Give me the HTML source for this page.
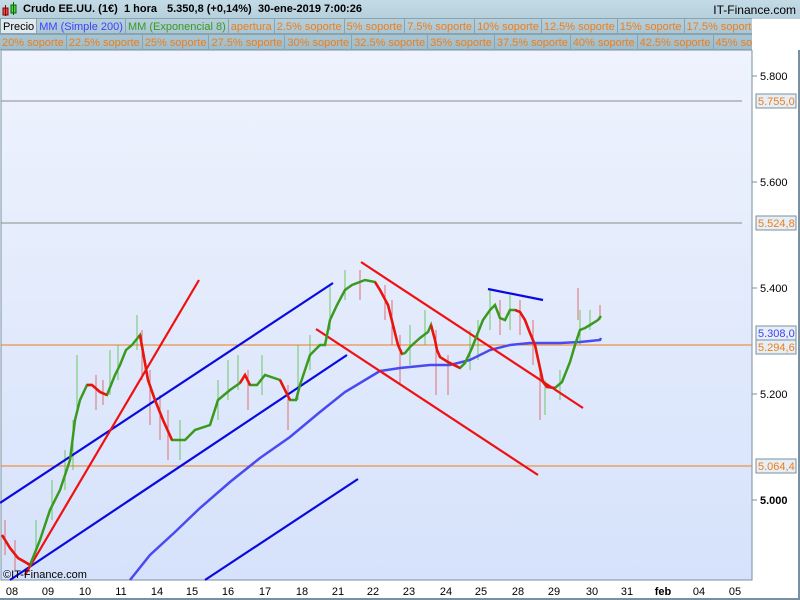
<!DOCTYPE html>
<html><head><meta charset="utf-8"><style>
body{margin:0;width:800px;height:600px;overflow:hidden;background:#fff;font-family:"Liberation Sans",sans-serif;}
#hdr{position:absolute;left:0;top:0;width:800px;height:50px;background:linear-gradient(#c4dbe6,#9dbccb);}
.row{position:absolute;left:0;height:16px;display:flex;font-size:11px;line-height:16px;}
.row span{border:1px solid #8aa3b0;border-left:none;padding:0 2px;white-space:nowrap;color:#f07d18;}
.t{position:absolute;top:3px;font-size:11px;font-weight:bold;color:#000;white-space:nowrap}
</style></head><body>
<div id="hdr">
<svg style="position:absolute;left:2px;top:2px" width="16" height="14"><rect x="1" y="6" width="5" height="7" fill="#e25050" stroke="#800"/><line x1="3.5" y1="3" x2="3.5" y2="14" stroke="#800"/><rect x="9" y="3" width="5" height="8" fill="#5bd04a" stroke="#060"/><line x1="11.5" y1="0" x2="11.5" y2="13" stroke="#060"/></svg>
<div class="t" style="left:23px">Crudo EE.UU. (1€)</div>
<div class="t" style="left:124px">1 hora</div>
<div class="t" style="left:167px">5.350,8 (+0,14%)</div>
<div class="t" style="left:258px">30-ene-2019 7:00:26</div>
<div class="t" style="right:4px;font-size:12px;font-weight:normal">IT-Finance.com</div>
<div class="row" style="top:18px;width:752px;overflow:hidden"><span style="color:#000;background:#dfe9ee;border-left:1px solid #8aa3b0">Precio</span><span style="color:#4040ff">MM (Simple 200)</span><span style="color:#3a9a20">MM (Exponencial 8)</span><span>apertura</span><span>2.5% soporte</span><span>5% soporte</span><span>7.5% soporte</span><span>10% soporte</span><span>12.5% soporte</span><span>15% soporte</span><span>17.5% soporte</span></div>
<div class="row" style="top:34px;width:752px;overflow:hidden"><span>20% soporte</span><span>22.5% soporte</span><span>25% soporte</span><span>27.5% soporte</span><span>30% soporte</span><span>32.5% soporte</span><span>35% soporte</span><span>37.5% soporte</span><span>40% soporte</span><span>42.5% soporte</span><span>45% soporte</span></div>
<div style="position:absolute;left:752px;top:19px;width:48px;height:31px;background:#fff"></div>
</div>
<svg style="position:absolute;left:0;top:50px" width="800" height="550" viewBox="0 50 800 550" font-family="Liberation Sans, sans-serif" font-size="11">
<defs><linearGradient id="g" x1="0" y1="0" x2="0" y2="1"><stop offset="0" stop-color="#eef3fd"/><stop offset="1" stop-color="#d6e2fb"/></linearGradient></defs>
<rect x="1" y="50" width="751" height="530" fill="url(#g)" stroke="#7890a0"/>
<rect x="0" y="598" width="800" height="2" fill="#7890a0"/>
<rect x="798" y="50" width="2" height="550" fill="#7890a0"/>
<g stroke="#8a8a8a"><line x1="1" y1="101" x2="742" y2="101"/><line x1="1" y1="223" x2="742" y2="223"/></g>
<g stroke="#f07d18"><line x1="1" y1="345" x2="752" y2="345"/><line x1="1" y1="466" x2="752" y2="466"/></g>
<g stroke="#50c040" stroke-width="1" opacity="0.8">
<line x1="36" y1="520" x2="36" y2="555"/><line x1="52" y1="480" x2="52" y2="520"/><line x1="65" y1="450" x2="65" y2="490"/><line x1="73" y1="420" x2="73" y2="470"/><line x1="77" y1="355" x2="77" y2="410"/><line x1="110" y1="350" x2="110" y2="395"/><line x1="118" y1="345" x2="118" y2="380"/><line x1="137" y1="315" x2="137" y2="350"/><line x1="180" y1="420" x2="180" y2="460"/><line x1="218" y1="380" x2="218" y2="420"/><line x1="228" y1="360" x2="228" y2="400"/><line x1="238" y1="355" x2="238" y2="390"/><line x1="262" y1="355" x2="262" y2="395"/><line x1="298" y1="345" x2="298" y2="400"/><line x1="310" y1="335" x2="310" y2="370"/><line x1="330" y1="285" x2="330" y2="330"/><line x1="345" y1="270" x2="345" y2="300"/><line x1="410" y1="325" x2="410" y2="365"/><line x1="425" y1="310" x2="425" y2="345"/><line x1="470" y1="330" x2="470" y2="370"/><line x1="478" y1="320" x2="478" y2="360"/><line x1="490" y1="290" x2="490" y2="330"/><line x1="510" y1="295" x2="510" y2="330"/><line x1="545" y1="380" x2="545" y2="415"/><line x1="560" y1="370" x2="560" y2="400"/><line x1="580" y1="310" x2="580" y2="345"/><line x1="590" y1="310" x2="590" y2="330"/></g>
<g stroke="#e05050" stroke-width="1" opacity="0.8">
<line x1="5" y1="520" x2="5" y2="555"/><line x1="15" y1="540" x2="15" y2="570"/><line x1="96" y1="375" x2="96" y2="410"/><line x1="103" y1="380" x2="103" y2="405"/><line x1="142" y1="330" x2="142" y2="380"/><line x1="150" y1="370" x2="150" y2="425"/><line x1="160" y1="395" x2="160" y2="440"/><line x1="168" y1="410" x2="168" y2="460"/><line x1="248" y1="370" x2="248" y2="410"/><line x1="288" y1="385" x2="288" y2="430"/><line x1="360" y1="270" x2="360" y2="300"/><line x1="385" y1="285" x2="385" y2="320"/><line x1="392" y1="300" x2="392" y2="345"/><line x1="400" y1="335" x2="400" y2="385"/><line x1="436" y1="330" x2="436" y2="395"/><line x1="448" y1="355" x2="448" y2="395"/><line x1="500" y1="300" x2="500" y2="335"/><line x1="520" y1="300" x2="520" y2="335"/><line x1="533" y1="320" x2="533" y2="365"/><line x1="540" y1="370" x2="540" y2="420"/><line x1="578" y1="288" x2="578" y2="320"/><line x1="600" y1="305" x2="600" y2="320"/></g>
<polyline fill="none" stroke="#4a4af0" stroke-width="2.5" points="130,580 150,555 175,532 200,508 230,482 260,458 290,437 320,412 345,392 365,380 380,371 400,368 430,365 450,365 470,360 490,350 510,345 530,343 560,343 580,342 600,340 601,338"/>
<g stroke="#0a0ae0" stroke-width="2.2"><line x1="0" y1="503" x2="333" y2="283"/><line x1="10" y1="580" x2="347" y2="355"/><line x1="205" y1="580" x2="358" y2="479"/><line x1="488" y1="289" x2="543" y2="300"/></g>
<g stroke="#f01010" stroke-width="2.2"><line x1="25" y1="575" x2="199" y2="280"/><line x1="361" y1="262" x2="583" y2="408"/><line x1="316" y1="329" x2="538" y2="475"/></g>
<polyline fill="none" stroke="#3a9a20" stroke-width="2.5" points="2,535 10,548 18,558 25,562 30,565 40,540 50,510 60,490 70,460 75,420 80,400 87,385 92,385 100,392 107,395 115,375 120,365 126,350 132,345 140,335 148,380 155,400 163,420 172,440 185,440 195,430 210,425 218,400 230,390 240,383 245,375 250,385 257,385 265,375 280,380 290,400 296,400 300,385 305,370 310,355 320,345 325,345 330,320 337,305 345,290 352,285 365,280 375,282 380,290 388,305 393,325 398,345 402,354 405,353 410,347 420,338 428,332 431,325 435,340 437,350 440,357 448,362 460,368 465,363 472,348 477,335 483,320 490,310 495,305 500,318 505,320 510,310 515,310 520,312 525,320 530,333 535,345 543,382 547,387 555,388 562,382 570,362 575,345 580,330 585,328 590,325 598,320 601,316"/>
<g fill="none" stroke="#f01010" stroke-width="2.5"><polyline points="2,535 10,548 18,558 25,562 30,565"/><polyline points="140,335 148,380 155,400 163,420 172,440"/><polyline points="280,380 290,400"/><polyline points="375,282 380,290 388,305 393,325 398,345 402,354"/><polyline points="431,325 435,340 437,350 440,357 448,362 460,368"/><polyline points="515,310 520,312 525,320 530,333 535,345 543,382 547,387 555,388"/><polyline points="87,385 92,385 100,392 107,395"/><polyline points="240,383 245,375 250,385"/></g>
<g stroke="#7890a0"><line x1="752" y1="76" x2="757" y2="76"/><line x1="752" y1="182" x2="757" y2="182"/><line x1="752" y1="288" x2="757" y2="288"/><line x1="752" y1="394" x2="757" y2="394"/><line x1="752" y1="500" x2="757" y2="500"/></g>
<g fill="#000"><text x="760" y="80">5.800</text><text x="760" y="186">5.600</text><text x="760" y="292">5.400</text><text x="760" y="398">5.200</text><text x="760" y="504" font-weight="bold">5.000</text></g>
<g font-size="11"><rect x="756" y="94" width="40" height="14" fill="#e6eef6" stroke="#7890a0"/><text x="758" y="105" fill="#f07d18">5.755,0</text>
<rect x="756" y="216" width="40" height="14" fill="#e6eef6" stroke="#7890a0"/><text x="758" y="227" fill="#f07d18">5.524,8</text>
<rect x="756" y="326" width="40" height="14" fill="#e6eef6" stroke="#7890a0"/><text x="758" y="337" fill="#4040ff">5.308,0</text>
<rect x="756" y="340" width="40" height="14" fill="#e6eef6" stroke="#7890a0"/><text x="758" y="351" fill="#f07d18">5.294,6</text>
<rect x="756" y="459" width="40" height="14" fill="#e6eef6" stroke="#7890a0"/><text x="758" y="470" fill="#f07d18">5.064,4</text></g>
<text x="3" y="578" font-size="11" fill="#000">©IT-Finance.com</text>
<g fill="#000" text-anchor="middle"><text x="12" y="595">08</text><text x="48" y="595">09</text><text x="85" y="595">10</text><text x="121" y="595">11</text><text x="157" y="595">14</text><text x="192" y="595">15</text><text x="228" y="595">16</text><text x="265" y="595">17</text><text x="302" y="595">18</text><text x="338" y="595">21</text><text x="373" y="595">22</text><text x="409" y="595">23</text><text x="446" y="595">24</text><text x="481" y="595">25</text><text x="518" y="595">28</text><text x="554" y="595">29</text><text x="592" y="595">30</text><text x="627" y="595">31</text><text x="663" y="595" font-weight="bold">feb</text><text x="699" y="595">04</text><text x="735" y="595">05</text></g>
</svg>
</body></html>
